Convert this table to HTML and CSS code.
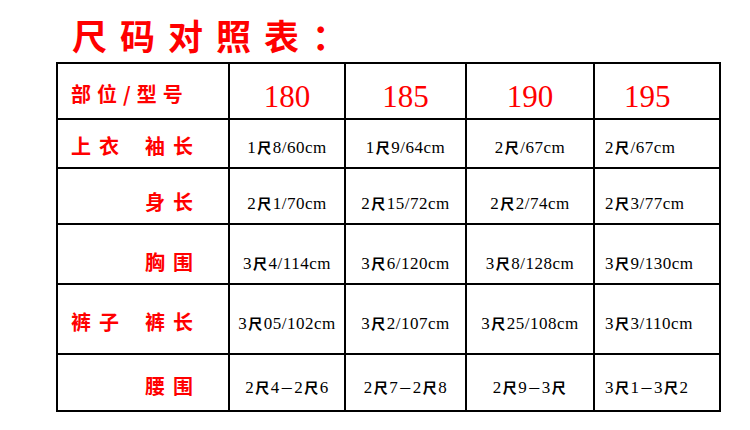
FILE: index.html
```html
<!DOCTYPE html>
<html lang="zh-CN">
<head>
<meta charset="utf-8">
<title>尺码对照表</title>
<link rel="stylesheet" href="styles.css">
</head>
<body>
<h1 class="title">尺码对照表：</h1>
<div class="table">
  <div class="row head">
    <div class="cell label"><span class="grp">部位/型号</span></div>
    <div class="cell num">180</div>
    <div class="cell num">185</div>
    <div class="cell num">190</div>
    <div class="cell num last">195</div>
  </div>
  <div class="row r1">
    <div class="cell label"><span class="grp">上衣</span><span class="part">袖长</span></div>
    <div class="cell">1<span class="c">尺</span>8/60cm</div>
    <div class="cell">1<span class="c">尺</span>9/64cm</div>
    <div class="cell">2<span class="c">尺</span>/67cm</div>
    <div class="cell last">2<span class="c">尺</span>/67cm</div>
  </div>
  <div class="row r2">
    <div class="cell label"><span class="grp"></span><span class="part">身长</span></div>
    <div class="cell">2<span class="c">尺</span>1/70cm</div>
    <div class="cell">2<span class="c">尺</span>15/72cm</div>
    <div class="cell">2<span class="c">尺</span>2/74cm</div>
    <div class="cell last">2<span class="c">尺</span>3/77cm</div>
  </div>
  <div class="row r3">
    <div class="cell label"><span class="grp"></span><span class="part">胸围</span></div>
    <div class="cell">3<span class="c">尺</span>4/114cm</div>
    <div class="cell">3<span class="c">尺</span>6/120cm</div>
    <div class="cell">3<span class="c">尺</span>8/128cm</div>
    <div class="cell last">3<span class="c">尺</span>9/130cm</div>
  </div>
  <div class="row r4">
    <div class="cell label"><span class="grp">裤子</span><span class="part">裤长</span></div>
    <div class="cell">3<span class="c">尺</span>05/102cm</div>
    <div class="cell">3<span class="c">尺</span>2/107cm</div>
    <div class="cell">3<span class="c">尺</span>25/108cm</div>
    <div class="cell last">3<span class="c">尺</span>3/110cm</div>
  </div>
  <div class="row r5">
    <div class="cell label"><span class="grp"></span><span class="part">腰围</span></div>
    <div class="cell">2<span class="c">尺</span>4<span class="d">－</span>2<span class="c">尺</span>6</div>
    <div class="cell">2<span class="c">尺</span>7<span class="d">－</span>2<span class="c">尺</span>8</div>
    <div class="cell">2<span class="c">尺</span>9<span class="d">－</span>3<span class="c">尺</span></div>
    <div class="cell last">3<span class="c">尺</span>1<span class="d">－</span>3<span class="c">尺</span>2</div>
  </div>
</div>
</body>
</html>
```
FILE: styles.css
```css
html, body {
  margin: 0;
  padding: 0;
  background: #fff;
}

body {
  width: 750px;
  height: 430px;
  overflow: hidden;
  font-family: "Liberation Serif", "Noto Sans CJK SC", serif;
}

.title {
  margin: 0;
  padding: 17px 0 0 72px;
  height: 50px;
  box-sizing: border-box;
  font-family: "Noto Sans CJK SC", sans-serif;
  font-weight: 700;
  font-size: 35px;
  line-height: 35px;
  letter-spacing: 13px;
  color: #ff0000;
}

.table {
  margin: 12px 0 0 56px;
  width: max-content;
  display: flex;
  flex-direction: column;
  gap: 2px;
  padding: 2px;
  background: #000;
}

.row {
  display: grid;
  grid-template-columns: 170px 114px 119px 126px 124px;
  gap: 2px;
  --pb: 10px;
}

.head { height: 54px; --pb: 6px; }
.r1 { height: 47px; --pb: 11px; }
.r2 { height: 54px; --pb: 11px; }
.r3 { height: 58px; --pb: 11px; }
.r4 { height: 68px; --pb: 21px; }
.r5 { height: 55px; --pb: 14px; }

.cell {
  background: #fff;
  display: flex;
  align-items: flex-end;
  justify-content: center;
  padding-bottom: var(--pb);
  box-sizing: border-box;
  font-size: 17px;
  line-height: 17px;
  letter-spacing: 0.5px;
  color: #000;
  white-space: nowrap;
}

.cell.last {
  justify-content: flex-start;
  padding-left: 10px;
}

.c {
  font-family: "Noto Sans CJK SC", sans-serif;
  font-weight: 700;
  font-size: 14px;
  line-height: 17px;
  margin: 0 1px;
}

.d {
  font-family: "Noto Sans CJK SC", sans-serif;
  font-size: 14px;
  line-height: 17px;
}

.label {
  justify-content: flex-start;
  padding-left: 13px;
  font-family: "Noto Sans CJK SC", sans-serif;
  font-weight: 700;
  font-size: 20px;
  line-height: 20px;
  letter-spacing: 8px;
  color: #ff0000;
}

.head .label {
  padding-bottom: 14px;
  letter-spacing: 6px;
}

.grp {
  display: inline-block;
  min-width: 74px;
}

.num {
  font-size: 31px;
  line-height: 31px;
  letter-spacing: 0;
  color: #ff0000;
}

.head .num.last {
  padding-left: 29px;
}
```
